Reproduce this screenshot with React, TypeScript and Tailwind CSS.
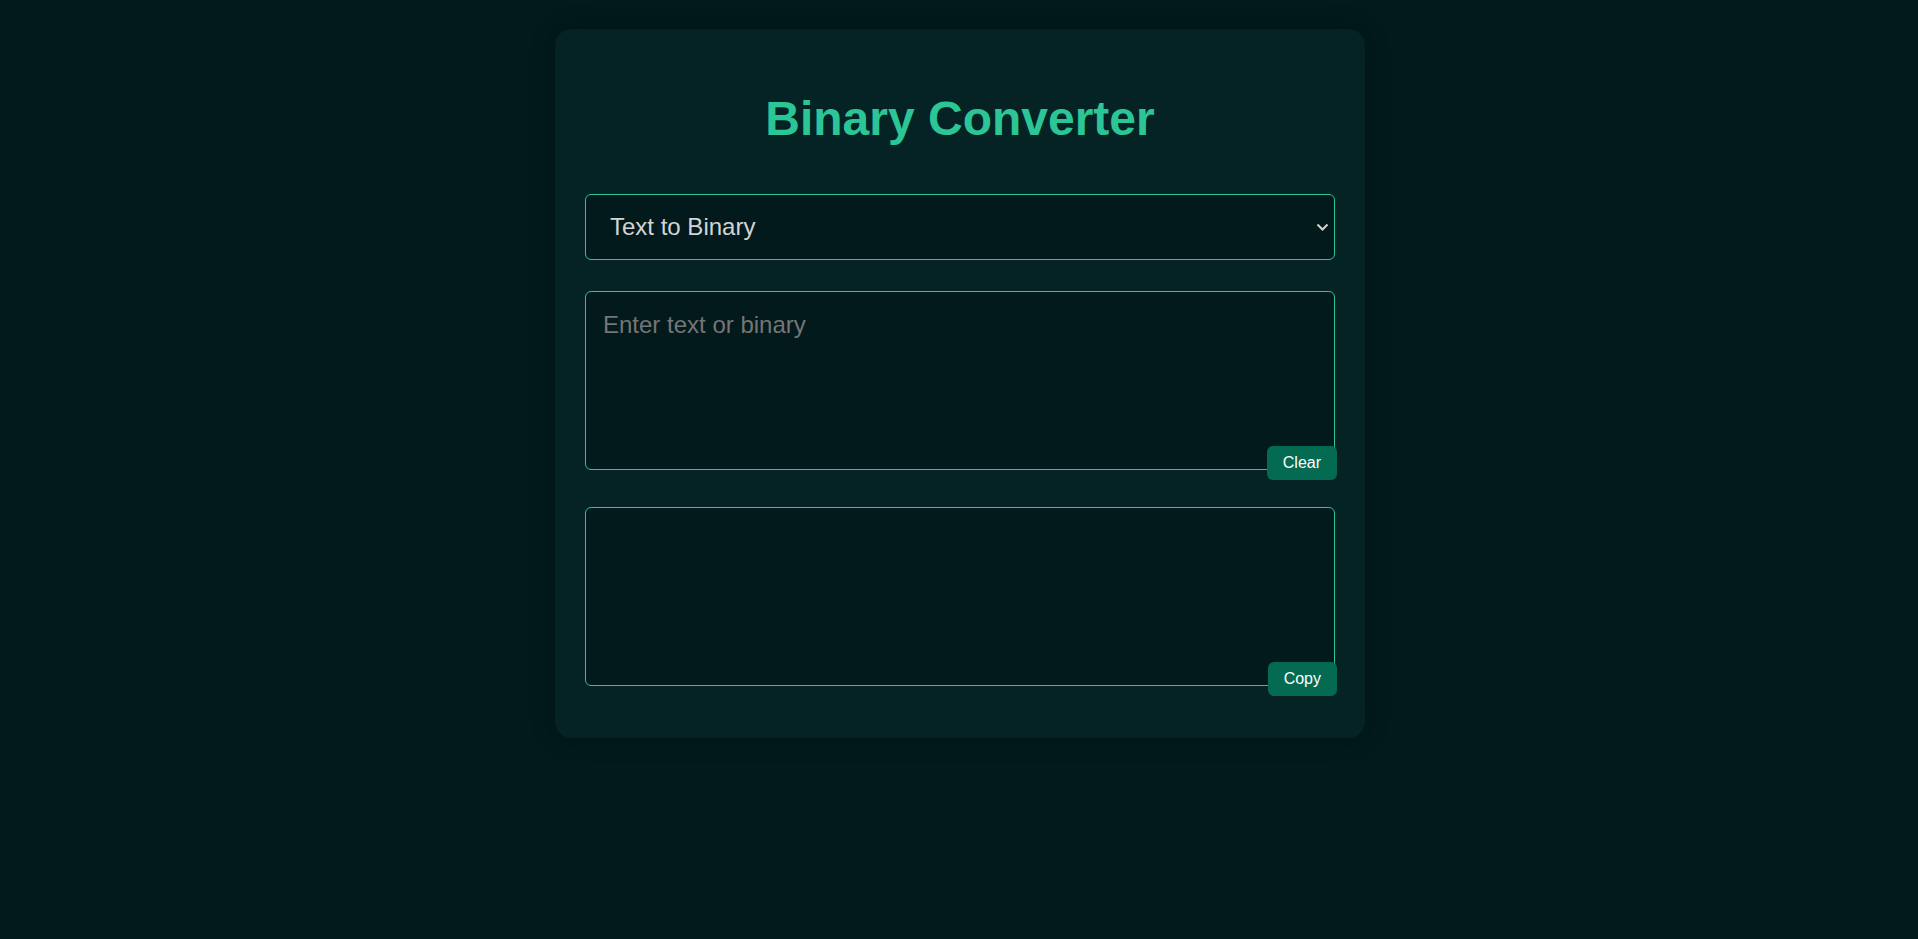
import React, { useState } from "react";

export default function App() {
  const [mode, setMode] = useState("t2b");
  const [input, setInput] = useState("");
  const output = "";
  return (
    <div
      className="min-h-screen w-full bg-[#021a1c] flex justify-center pt-[29px] pl-[2px]"
      style={{ fontFamily: '"Liberation Sans", Arial, sans-serif' }}
    >
      <div className="w-[810px] self-start bg-[#052224] rounded-2xl px-[30px] pt-[30px] pb-[52px] shadow-[0_0_24px_rgba(0,0,0,0.25)]">
        <h1 className="mt-[32px] mb-[48px] text-center text-[48px] leading-[55px] font-bold text-[#2bc596]">
          Binary Converter
        </h1>
        <div className="relative">
          <select
            value={mode}
            onChange={(e) => setMode(e.target.value)}
            className="appearance-none block w-full h-[66px] bg-[#021a1c] border border-[#2bc596] rounded-md pl-[24px] pr-10 text-[24px] text-[#d4d4d4] outline-none"
          >
            <option value="t2b">Text to Binary</option>
            <option value="b2t">Binary to Text</option>
          </select>
          <svg
            className="absolute right-[6px] top-[29px] pointer-events-none"
            width="13"
            height="8"
            viewBox="0 0 13 8"
            fill="none"
          >
            <path d="M1.5 1.5L6.5 6.5L11.5 1.5" stroke="#d4d4d4" strokeWidth="2" />
          </svg>
        </div>
        <div className="relative mt-[31px]">
          <textarea
            value={input}
            onChange={(e) => setInput(e.target.value)}
            placeholder="Enter text or binary"
            className="block w-full h-[179px] resize-none bg-[#021a1c] border border-[#2bc596] rounded-md px-[17px] py-[15px] text-[24px] text-[#d4d4d4] placeholder:text-[#757575] outline-none"
          />
          <button className="absolute right-[-2px] bottom-[-10px] bg-[#046a52] text-white text-[16px] leading-[18px] px-4 py-2 rounded-md">
            Clear
          </button>
        </div>
        <div className="relative mt-[37px]">
          <textarea
            value={output}
            readOnly
            className="block w-full h-[179px] resize-none bg-[#021a1c] border border-[#2bc596] rounded-md px-[17px] py-[15px] text-[24px] text-[#d4d4d4] outline-none"
          />
          <button className="absolute right-[-2px] bottom-[-10px] bg-[#046a52] text-white text-[16px] leading-[18px] px-4 py-2 rounded-md">
            Copy
          </button>
        </div>
      </div>
    </div>
  );
}
